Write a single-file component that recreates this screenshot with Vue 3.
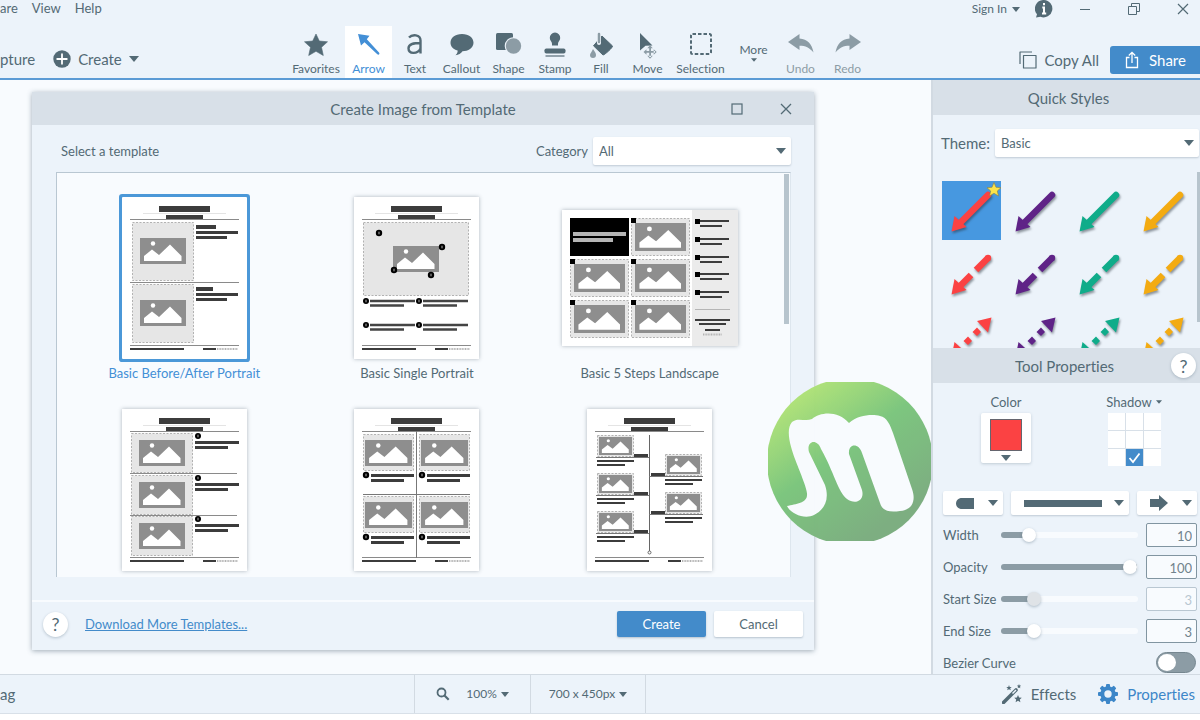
<script setup>
import { ref } from 'vue'

const tools = [
  { id: 'favorites', label: 'Favorites' },
  { id: 'arrow', label: 'Arrow' },
  { id: 'text', label: 'Text' },
  { id: 'callout', label: 'Callout' },
  { id: 'shape', label: 'Shape' },
  { id: 'stamp', label: 'Stamp' },
  { id: 'fill', label: 'Fill' },
  { id: 'move', label: 'Move' },
  { id: 'selection', label: 'Selection' },
  { id: 'more', label: 'More' },
  { id: 'undo', label: 'Undo' },
  { id: 'redo', label: 'Redo' },
]
const activeTool = ref('arrow')

const templates = [
  { id: 'before', label: 'Basic Before/After Portrait' },
  { id: 'single', label: 'Basic Single Portrait' },
  { id: 'land', label: 'Basic 5 Steps Landscape' },
  { id: 'three' },
  { id: 'four' },
  { id: 'timeline' },
]
const selected = ref('before')

const colors = ['#fb4243', '#5f2387', '#10ac8a', '#f3ab12']
const quickStyles = [0, 1, 2].flatMap((row) => colors.map((color) => ({ row, color })))

const sliders = ref([
  { id: 'width', label: 'Width', pos: 17, value: '10' },
  { id: 'opacity', label: 'Opacity', pos: 99, value: '100' },
  { id: 'start', label: 'Start Size', pos: 21, value: '3', disabled: true },
  { id: 'end', label: 'End Size', pos: 21, value: '3' },
])
const shadow = ref(7)
const bezier = ref(false)
const category = ref('All')
const theme = ref('Basic')
</script>

<template>
  <div class="app">
    <svg class="defs" aria-hidden="true">
      <symbol id="pic" viewBox="0 0 46 26" preserveAspectRatio="none">
        <rect width="46" height="26" fill="#8e8e8e" />
        <circle cx="13" cy="5.500" r="2.200" fill="#fff" />
        <path d="M4 23V18L12 11.500 19 17 30 6.500 41.500 18V23Z" fill="#fff" />
      </symbol>
      <symbol id="caret" viewBox="0 0 10 6"><path d="M0 0H10L5 6Z" fill="#536a75" /></symbol>
    </svg>

    <header class="top">
      <div class="top-left">
        <nav class="menu">
          <a href="#">are</a>
          <a href="#">View</a>
          <a href="#">Help</a>
        </nav>
        <div class="actions">
          <button class="plain">pture</button>
          <button class="plain create-menu">
            <svg width="18" height="18" viewBox="0 0 18 18"><circle cx="9" cy="9" r="8.700" fill="#536a75" /><path d="M9 4.200V13.800M4.200 9H13.800" stroke="#fff" stroke-width="1.800" stroke-linecap="round" /></svg>
            Create
            <svg width="10" height="6"><use href="#caret" /></svg>
          </button>
        </div>
      </div>

      <div class="tools">
        <button v-for="t in tools" :key="t.id" :class="['tool', t.id, { active: activeTool === t.id }]" @click="activeTool = t.id">
          <svg v-if="t.id !== 'more'" class="tool-icon" width="28" height="28" viewBox="0 0 28 28">
            <path v-if="t.id === 'favorites'" d="M14 3 17.300 10 25.500 10.800 19.500 16.300 21.300 24.500 14 20.300 6.700 24.500 8.500 16.300 2.500 10.800 10.700 10Z" fill="#536a75" stroke="#536a75" stroke-width=".6" stroke-linejoin="round" />
            <path v-else-if="t.id === 'arrow'" d="M3 3 14.500 4.700 11.800 8.300 24 21.500C25.200 23 23.700 24.500 22.300 23.300L9.500 11.300 6 14.500Z" fill="#438fd6" />
            <path v-else-if="t.id === 'text'" d="M8 6.500C11 3.200 19.500 3 19.500 9.500V22.500M19.500 12C13 12 7.500 12.500 7.500 17.300 7.500 23.300 16.500 23.500 19.500 17.500" fill="none" stroke="#536a75" stroke-width="2.400" />
            <path v-else-if="t.id === 'callout'" d="M14 3C21 3 25.500 6.800 25.500 11.800 25.500 17 20 20.300 14.500 20.300 13 22.500 10.500 24 7.500 24.200 9.300 22.800 9.800 21 9.600 19.600 5 18.300 2.500 15.300 2.500 11.800 2.500 6.800 7 3 14 3Z" fill="#536a75" />
            <g v-else-if="t.id === 'shape'"><rect x="1" y="2" width="17" height="17" rx="1.500" fill="#536a75" /><circle cx="18.500" cy="15" r="8.800" fill="#ecf3fa" /><circle cx="18.500" cy="15" r="7.700" fill="#8c9ca5" /></g>
            <g v-else-if="t.id === 'stamp'"><path d="M14 1.500A5.200 5.200 0 0 1 19.200 7C19.200 9.500 17 10.500 17 12.800V14.500H11V12.800C11 10.500 8.800 9.500 8.800 7A5.200 5.200 0 0 1 14 1.500Z" fill="#536a75" /><rect x="3.500" y="17.500" width="21" height="5" rx="1.800" fill="#536a75" /><path d="M4.500 25H23.500" stroke="#82939c" stroke-width="1.700" /></g>
            <g v-else-if="t.id === 'fill'"><path d="M15 5 25.500 15C26 16.500 17.500 24 16 24L6.500 14.800Z" fill="#536a75" stroke="#536a75" stroke-linejoin="round" /><path d="M12 3V12" stroke="#ecf3fa" stroke-width="4" stroke-linecap="round" /><path d="M12 3V11" stroke="#8c9ca5" stroke-width="2.500" stroke-linecap="round" /><path d="M6 18C8 21 9 22.500 9 24A3 3 0 0 1 3 24C3 22.500 5 20.500 6 18Z" fill="#8c9ca5" /></g>
            <g v-else-if="t.id === 'move'"><path d="M6 2 18.500 14.500 11.500 14.800 6 19.500Z" fill="#536a75" /><path fill="#8c9ca5" d="M15.200 16H17V26H15.200ZM11 20H21V21.700H11ZM16 14.300 18.800 17.300H13.300ZM16 27.700 18.800 24.700H13.300ZM9.500 21 12.500 18.200V23.700ZM22.700 21 19.700 18.200V23.700Z" /></g>
            <rect v-else-if="t.id === 'selection'" x="4" y="3" width="20" height="20" rx="1.500" fill="none" stroke="#536a75" stroke-width="2" stroke-dasharray="3.500 2" />
            <path v-else-if="t.id === 'undo'" d="M1 11 12.500 3V7.500C20.500 8.300 25 13 26.500 21.500 22.500 16.500 18.500 14.700 12.500 14.700V19Z" fill="#8c9ca5" />
            <path v-else d="M27 11 15.500 3V7.500C7.500 8.300 3 13 1.500 21.500 5.500 16.500 9.500 14.700 15.500 14.700V19Z" fill="#8c9ca5" />
          </svg>
          <span>{{ t.label }}</span>
          <svg v-if="t.id === 'more'" width="6" height="4"><use href="#caret" /></svg>
        </button>
      </div>

      <div class="top-right">
        <div class="window">
          <button class="plain sign">Sign In <svg width="8" height="5"><use href="#caret" /></svg></button>
          <button class="plain info" aria-label="Information"><svg width="18" height="18" viewBox="0 0 18 18"><path d="M9 0A8.700 8.700 0 1 1 5.500 16.800L1 17.500 2 14.300A8.700 8.700 0 0 1 9 0Z" fill="#536a75" /><path d="M9 3V5.300M7.300 7.500H9V13.300M7 13.500H11.200" fill="none" stroke="#fff" stroke-width="2" /></svg></button>
          <button class="plain" aria-label="Minimize"><svg width="12" height="12"><path d="M1 6.500H11" stroke="#536a75" /></svg></button>
          <button class="plain" aria-label="Restore"><svg width="12" height="12"><path d="M.5 3.500H8.500V11.500H.500ZM3.500 3V.5H11.500V8.500H9" fill="none" stroke="#536a75" /></svg></button>
          <button class="plain" aria-label="Close window"><svg width="12" height="12"><path d="M1 1 11 11M11 1 1 11" stroke="#536a75" stroke-width="1.200" /></svg></button>
        </div>
        <div class="share-row">
          <button class="plain copy"><svg width="18" height="18" viewBox="0 0 18 18"><path d="M4.500 4.500H17V17H4.500ZM1 13V1H13" fill="none" stroke="#536a75" stroke-width="1.200" stroke-linejoin="round" /></svg>Copy All</button>
          <button class="share"><svg width="14" height="18" viewBox="0 0 14 18"><path d="M4.500 6.500H1.500V16.500H12.500V6.500H9.500M7 12V1.500M3.800 4.500 7 1.300 10.200 4.500" fill="none" stroke="#fff" stroke-width="1.300" /></svg>Share</button>
        </div>
      </div>
    </header>

    <div class="body">
      <main class="canvas">
        <section class="dialog" role="dialog" aria-label="Create Image from Template">
          <header class="dialog-head">
            <h1>Create Image from Template</h1>
            <div class="dialog-controls">
              <button class="plain" aria-label="Maximize"><svg width="12" height="12"><rect x="1" y="1" width="10" height="10" fill="none" stroke="#536a75" stroke-width="1.200" /></svg></button>
              <button class="plain" aria-label="Close dialog"><svg width="12" height="12"><path d="M1 1 11 11M11 1 1 11" stroke="#536a75" stroke-width="1.300" /></svg></button>
            </div>
          </header>
          <div class="filter">
            <h2>Select a template</h2>
            <label for="category">Category</label>
            <div class="select">
              <select id="category" v-model="category"><option>All</option></select>
              <svg class="caret" width="10" height="6"><use href="#caret" /></svg>
            </div>
          </div>
          <div class="list">
            <button v-for="t in templates" :key="t.id" :class="['card', { selected: selected === t.id }]" :aria-label="t.label || 'Template'" @click="selected = t.id">
              <span class="frame">
                <svg v-if="t.id === 'land'" class="thumb" width="176" height="136" viewBox="0 0 176 136">
                  <rect x="130" width="46" height="136" fill="#ebebeb" />
                  <rect x="8" y="8" width="59" height="38" />
                  <g fill="#b5b5b5"><rect x="11" y="22" width="53" height="4" /><rect x="11" y="28" width="40" height="4" /></g>
                  <template v-for="n in 6" :key="n">
                    <g v-if="n > 1" :transform="`translate(${((n - 1) % 2) * 61 + 8}, ${Math.floor((n - 1) / 2) * 41 + 8})`">
                      <rect class="drop" x=".5" y=".5" width="58" height="37" />
                      <use href="#pic" x="4" y="5" width="51" height="28" />
                      <rect width="5" height="5" />
                    </g>
                  </template>
                  <g v-for="n in 5" :key="'b' + n" :transform="`translate(133, ${Math.round((n - 1) * 17.8 + 9)})`">
                    <rect width="5" height="5" /><rect x="5" y="1" width="29" height="2" fill="#3c3c3c" /><rect x="5" y="6" width="22" height="2" fill="#3c3c3c" />
                  </g>
                  <path d="M133 99.500H168" stroke="#b5b5b5" />
                  <g fill="#3c3c3c"><rect x="133" y="109" width="35" height="2" /><rect x="137" y="113" width="27" height="2" /><rect x="143" y="119" width="15" height="2" /></g>
                  <path d="M141 124.500H160" stroke="#b4b4b4" stroke-width="2" stroke-dasharray="1 .6" />
                </svg>
                <svg v-else class="thumb" width="125" height="162" viewBox="0 0 125 162">
                  <g fill="#3c3c3c">
                    <rect x="37" y="9" width="51" height="6" /><rect x="44" y="18" width="37" height="4" />
                    <rect x="8" y="151" width="54" height="2" /><rect x="81" y="151" width="13" height="2" />
                  </g>
                  <path d="M21 16.500H104" stroke="#e4e4e4" />
                  <path d="M8 22.500H117M8 148.500H117" stroke="#8a8a8a" />
                  <path d="M95 152H116" stroke="#b4b4b4" stroke-width="2" stroke-dasharray="1 .6" />
                  <template v-if="t.id === 'before'">
                    <g v-for="n in 2" :key="n" :transform="`translate(0, ${(n - 1) * 62})`">
                      <rect class="drop" x="10.500" y="25.500" width="61" height="58" />
                      <use href="#pic" x="18" y="41" width="46" height="26" />
                      <g fill="#3c3c3c"><rect x="74" y="28" :width="n === 1 ? 20 : 17" height="4" /><rect x="74" y="34" width="42" height="3" /><rect x="74" y="39" width="31" height="3" /></g>
                    </g>
                    <path d="M8 85.500H117" stroke="#8a8a8a" />
                  </template>
                  <template v-else-if="t.id === 'single'">
                    <rect class="drop" x="9.500" y="25.500" width="105" height="73" />
                    <use href="#pic" x="39" y="49" width="46" height="26" />
                    <g v-for="p in [[25, 36], [88, 50], [40, 73], [77, 78]]" :key="p[0]" :transform="`translate(${p[0]}, ${p[1]})`">
                      <circle r="3.200" /><path d="M0-1.300V1.300" stroke="#fff" stroke-width=".7" />
                    </g>
                    <g v-for="p in [[12, 104], [65, 104], [12, 128], [65, 128]]" :key="p.join()" :transform="`translate(${p[0]}, ${p[1]})`">
                      <circle r="3" /><path d="M0-1.300V1.300" stroke="#fff" stroke-width=".7" />
                      <path d="M4 0H49M4 4.500H38" stroke="#444" stroke-width="2.500" />
                    </g>
                  </template>
                  <template v-else-if="t.id === 'three'">
                    <g v-for="n in 3" :key="n" :transform="`translate(0, ${Math.round((n - 1) * 41.5)})`">
                      <rect class="drop" x="9.500" y="24.500" width="61" height="39" />
                      <use href="#pic" x="17" y="31" width="46" height="26" />
                      <circle cx="76" cy="27" r="3" /><path d="M76 25.700V28.300" stroke="#fff" stroke-width=".7" />
                      <rect x="73" y="32" width="44" height="3" fill="#3c3c3c" /><rect x="73" y="37" width="33" height="3" fill="#3c3c3c" />
                      <path v-if="n < 3" d="M8 64.500H115" stroke="#8a8a8a" />
                    </g>
                  </template>
                  <template v-else-if="t.id === 'four'">
                    <g v-for="p in [[0, 0], [56, 0], [0, 62], [56, 62]]" :key="p.join()" :transform="`translate(${p[0]}, ${p[1]})`">
                      <rect class="drop" x="9.500" y="25.500" width="50" height="36" />
                      <use href="#pic" x="11" y="31" width="47" height="26" />
                      <circle cx="12" cy="66" r="3.200" /><path d="M12 64.700V67.300" stroke="#fff" stroke-width=".7" />
                      <rect x="17" y="65" width="43" height="3" fill="#3c3c3c" /><rect x="17" y="70" width="33" height="3" fill="#3c3c3c" />
                    </g>
                    <path d="M62.500 22V149M9 85.500H116" stroke="#777" />
                  </template>
                  <template v-else>
                    <path d="M62.500 26V142" stroke="#666" /><circle cx="62.500" cy="143.500" r="1.500" fill="#fff" stroke="#666" />
                    <g v-for="p in [[0, 0], [0, 38], [0, 76], [68, 19], [68, 57]]" :key="p.join()" :transform="`translate(${p[0]}, ${p[1]})`">
                      <rect class="drop" x="10.500" y="26.500" width="36" height="21" />
                      <use href="#pic" x="12" y="28" width="33" height="18" />
                      <path :d="p[0] ? 'M-6 48.500H48' : 'M9 48.500H62'" stroke="#777" />
                      <g fill="#3c3c3c"><rect :x="p[0] ? -4 : 47" y="45" width="14" height="3" /><rect x="10" y="51" width="37" height="2" /><rect x="10" y="55" width="28" height="2" /></g>
                    </g>
                  </template>
                </svg>
              </span>
              <span v-if="t.label" class="caption">{{ t.label }}</span>
            </button>
            <i class="scroll"></i>
          </div>
          <footer class="dialog-foot">
            <button class="help" aria-label="Dialog help">?</button>
            <a href="#">Download More Templates...</a>
            <button class="btn primary">Create</button>
            <button class="btn">Cancel</button>
          </footer>
        </section>

        <svg class="brand" width="163" height="159" viewBox="0 0 163 159" aria-hidden="true">
          <defs>
            <linearGradient id="leaf" x1=".2" y1=".1" x2=".75" y2=".85"><stop offset="0" stop-color="#aee276" /><stop offset=".45" stop-color="#7ac57b" /><stop offset="1" stop-color="#7aac7d" /></linearGradient>
          </defs>
          <ellipse cx="82" cy="79.500" rx="83" ry="83" fill="url(#leaf)" />
          <path d="M24 40C30 35 37 40 44 37 52 30 70 28 81 41 90 33 104 32 112 34 119 35 122 43 125 51L144 107C148 118 145 128 132 129 120 131 114 128 112 121L94 71C91 61 80 61 81 72L94 108C97 119 87 123 79 117 70 110 66 90 53 67 49 56 38 59 41 70L57 103C62 118 56 128 46 133 36 138 22 131 19 124 28 122 39 121 39 113 40 108 31 88 27 77 23 66 17 48 24 40Z" fill="#f8fbfe" />
        </svg>
      </main>

      <aside class="side">
        <h2 class="panel-head">Quick Styles</h2>
        <div class="theme">
          <label for="theme">Theme:</label>
          <div class="select">
            <select id="theme" v-model="theme"><option>Basic</option></select>
            <svg class="caret" width="10" height="6"><use href="#caret" /></svg>
          </div>
        </div>
        <div class="styles">
          <button v-for="(s, i) in quickStyles" :key="i" :class="['style', { chosen: i === 0 }]" :aria-label="'Quick style ' + (i + 1)">
            <svg width="59" height="59" viewBox="0 0 59 59">
              <g class="stroke" :stroke="s.color" :fill="s.color">
                <path stroke="none" d="M9.500 50.500 12.500 35 24.500 46Z" />
                <path v-if="s.row === 0" d="M46 14 17 43" stroke-width="6.500" stroke-linecap="round" />
                <g v-else-if="s.row === 1"><path d="M46 14 34 26" stroke-width="6.500" /><circle cx="46" cy="14" r="3.200" stroke="none" /><path d="M29 31 17 43" stroke-width="6.500" /></g>
                <g v-else stroke="none"><path d="M49.500 10.500 35 14 46 25.500ZM35 20.500 39 25 35 29 30.500 25ZM26 29.500 30 34 26 38 21.500 34Z" /></g>
              </g>
              <path v-if="i === 0" d="M52 1.500 54 6.300 59 6.700 55.300 10 56.500 15 52 12.300 47.500 15 48.700 10 45 6.700 50 6.300Z" fill="#fbe34b" stroke="#8b8142" stroke-width=".6" />
            </svg>
          </button>
          <i class="scroll"></i>
        </div>
        <div class="panel-head tool-head">
          <h2>Tool Properties</h2>
          <button class="help" aria-label="Tool help">?</button>
        </div>
        <div class="props">
          <div class="swatches">
            <div class="prop color">
              <span>Color</span>
              <button class="swatch" aria-label="Arrow color"><i></i><svg width="10" height="6"><use href="#caret" /></svg></button>
            </div>
            <div class="prop shadow">
              <button class="plain">Shadow <svg width="6" height="4"><use href="#caret" /></svg></button>
              <div class="nine">
                <button v-for="n in 9" :key="n" :class="{ on: shadow === n - 1 }" :aria-label="'Shadow position ' + n" @click="shadow = n - 1">
                  <svg v-if="shadow === n - 1" width="17" height="17"><path d="M3.500 9 7 13 13.500 4.500" fill="none" stroke="#fff" stroke-width="1.800" /></svg>
                </button>
              </div>
            </div>
          </div>
          <div class="ends">
            <button class="drop-btn" aria-label="Start style"><svg width="18" height="11"><path d="M6 0H18V11H6C-2 11-2 0 6 0Z" fill="#536a75" /></svg><svg width="10" height="6"><use href="#caret" /></svg></button>
            <button class="drop-btn wide" aria-label="Line style"><svg width="78" height="7"><rect width="78" height="7" fill="#536a75" /></svg><svg width="10" height="6"><use href="#caret" /></svg></button>
            <button class="drop-btn" aria-label="End style"><svg width="18" height="16"><path d="M0 4H9V0L18 8 9 16V12H0Z" fill="#536a75" /></svg><svg width="10" height="6"><use href="#caret" /></svg></button>
          </div>
          <div v-for="s in sliders" :key="s.id" :class="['slider', { off: s.disabled }]">
            <label :for="s.id">{{ s.label }}</label>
            <input :id="s.id" v-model="s.pos" type="range" min="0" max="100" :disabled="s.disabled" :style="{ '--fill': s.pos + '%' }" />
            <input v-model="s.value" class="num" type="text" :disabled="s.disabled" :aria-label="s.label + ' value'" />
          </div>
          <div class="slider bezier">
            <label for="bezier">Bezier Curve</label>
            <input id="bezier" v-model="bezier" type="checkbox" class="toggle" />
          </div>
        </div>
      </aside>
    </div>

    <footer class="status">
      <button class="plain tag">ag</button>
      <button class="plain cell zoom">
        <svg width="14" height="14" viewBox="0 0 14 14"><circle cx="5.500" cy="5.500" r="4" fill="none" stroke="#536a75" stroke-width="1.800" /><path d="M8.500 8.500 12.700 12.700" stroke="#536a75" stroke-width="2.200" /></svg>
        <span>100% <svg width="8" height="5"><use href="#caret" /></svg></span>
      </button>
      <button class="plain cell size"><span>700 x 450px <svg width="8" height="5"><use href="#caret" /></svg></span></button>
      <div class="tabs">
        <button class="plain"><svg width="20" height="20" viewBox="0 0 20 20"><path d="M1.500 18.500 14 6" stroke="#536a75" stroke-width="3.600" stroke-linecap="round" /><path d="M10.500 9.500 14 6" stroke="#eef4fb" stroke-width="1.500" /><path fill="#536a75" d="M7 1 7.700 3 9.700 3 8.200 4.300 8.800 6.300 7 5.200 5.200 6.300 5.800 4.300 4.300 3H6.300ZM17 0 17.600 1.500 19 1.600 18 2.700 18.300 4.200 17 3.400 15.700 4.200 16 2.700 15 1.600 16.400 1.500ZM16 11 17.100 13.500 19.800 13.700 17.800 15.500 18.400 18.200 16 16.800 13.600 18.200 14.200 15.500 12.200 13.700 14.900 13.500Z" /></svg>Effects</button>
        <button class="plain current"><svg width="20" height="20" viewBox="-10 -10 20 20"><g fill="#3c86c8"><rect v-for="n in 8" :key="n" x="-2" y="-10" width="4" height="5" rx="1" :transform="`rotate(${n * 45})`" /></g><circle r="5.700" fill="none" stroke="#3c86c8" stroke-width="4" /></svg>Properties</button>
      </div>
    </footer>
  </div>
</template>

<style>
body { margin: 0; background: #fff; }
</style>

<style scoped>
.app { box-sizing: border-box; min-height: 100vh; padding-bottom: 6px; display: flex; flex-direction: column; overflow: hidden; font-family: Lato, "Liberation Sans", sans-serif; font-variant-ligatures: none; font-size: 13px; line-height: 16px; color: #536a75; background: #fff; }
.app * { box-sizing: border-box; }
.defs { position: absolute; width: 0; height: 0; }
button, select, input { font: inherit; font-variant-ligatures: none; color: inherit; margin: 0; }
button { cursor: pointer; border: 0; padding: 0; }
svg { display: block; flex: none; }
h1, h2 { margin: 0; font-weight: 400; font-size: 15px; }
.plain { background: none; display: flex; align-items: center; }

.top { display: flex; height: 80px; background: #ecf3fa; border-bottom: 2px solid #5b9bd5; }
.top-left { width: 287px; }
.menu { display: flex; gap: 14px; }
.menu a { color: inherit; text-decoration: none; }
.actions { display: flex; gap: 18px; height: 18px; margin-top: 34px; font-size: 15px; }
.create-menu { gap: 7px; }
.tools { display: flex; flex: 1; padding-top: 26px; }
.tool { width: 47px; background: none; display: flex; flex-direction: column; align-items: center; gap: 2px; padding-top: 5px; font-size: 12px; white-space: nowrap; height: 52px; }
.tool.favorites { width: 58px; }
.tool.text, .tool.stamp, .tool.fill { width: 46px; }
.tool.selection { width: 59px; }
.tool.active { background: #fff; color: #438fd6; }
.tool.more { padding-top: 16px; gap: 0; }
.tool.undo, .tool.redo { color: #8c9ca5; }
.top-right { display: flex; flex-direction: column; align-items: flex-end; }
.window { display: flex; align-items: center; height: 18px; padding-right: 11px; gap: 37px; }
.window .sign { gap: 5px; margin-right: -22px; font-size: 12px; }
.window .info { margin-right: -11px; }
.share-row { display: flex; align-items: center; gap: 11px; margin-top: 28px; font-size: 15px; }
.copy { gap: 8px; }
.share { display: flex; align-items: center; gap: 10px; height: 28px; width: 90px; padding-left: 15px; border-radius: 3px 0 0 3px; background: #438bca; color: #fff; }

.body { display: flex; flex: 1; min-height: 0; }
.canvas { position: relative; flex: 1; display: flex; padding: 12px 117px 24px 32px; background: #f8fbfe; }
.dialog { flex: 1; display: flex; flex-direction: column; background: #ecf3fa; box-shadow: 0 1px 5px rgba(50, 75, 95, .45); }
.dialog-head { position: relative; display: flex; align-items: center; justify-content: center; height: 33px; background: #d8e0e8; }
.dialog-controls { position: absolute; right: 22px; display: flex; gap: 37px; }
.filter { display: flex; align-items: center; gap: 5px; padding: 12px 23px 7px 29px; }
.filter h2 { font-size: 13px; flex: 1; }
.select { position: relative; width: 198px; }
.select select { appearance: none; width: 100%; height: 28px; padding: 0 6px; border: 0; border-radius: 2px; background: #fff; box-shadow: 0 1px 2px rgba(60, 85, 105, .25); }
.select .caret { position: absolute; right: 5px; top: 11px; pointer-events: none; }
.list { position: relative; flex: 1 1 400px; min-height: 0; max-height: 405px; margin: 0 23px 0 24px; padding: 21px 24px 0 11px; display: grid; grid-template-columns: repeat(3, 1fr); grid-auto-rows: 212px; overflow: hidden; background: #f8fbfe; border: 1px solid #b9c7d2; border-right-color: #dde6ee; border-bottom: 0; }
.card { background: none; display: flex; flex-direction: column; align-items: center; gap: 5px; padding-top: 2px; }
.frame { height: 164px; display: flex; align-items: center; }
.thumb { background: #fff; box-shadow: 0 0 4px rgba(60, 75, 90, .4); }
.card.selected .thumb { box-shadow: 0 0 0 3px #4b98d8; border-radius: 1px; }
.card.selected .caption { color: #438fd6; }
.drop { fill: #e6e6e6; stroke: #b2b2b2; stroke-dasharray: 2 1.5; }
.scroll { position: absolute; right: 1px; top: 1px; width: 5px; height: 150px; background: #b7c4cd; }
.dialog-foot { margin-top: auto; height: 50px; display: flex; align-items: center; gap: 8px; padding: 0 11px 4px; border-top: 2px solid #f8fbfe; }
.dialog-foot a { flex: 1; margin-left: 9px; color: #438bca; }
.help { width: 25px; height: 25px; border-radius: 50%; background: #fff; box-shadow: 0 1px 3px rgba(60, 85, 105, .3); font-size: 18px; }
.btn { width: 89px; height: 26px; border-radius: 2px; background: #fff; box-shadow: 0 1px 2px rgba(60, 85, 105, .3); }
.btn.primary { background: #438bca; color: #fff; }
.brand { position: absolute; right: 0; top: 302px; opacity: .97; }

.side { width: 269px; display: flex; flex-direction: column; background: #ecf3fa; border-left: 2px solid #d2dae2; }
.panel-head { height: 35px; display: flex; align-items: center; justify-content: center; padding-left: 4px; background: #d8e0e8; }
.theme { display: flex; align-items: center; gap: 5px; padding: 14px 1px 15px 8px; font-size: 15px; }
.theme .select { flex: 1; font-size: 13px; }
.styles { position: relative; height: 176px; padding: 9px 0 0 9px; display: grid; grid-template-columns: repeat(4, 59px); grid-auto-rows: 59px; gap: 4px 5px; overflow: hidden; }
.styles .scroll { right: 0; top: 0; width: 3px; }
.style { background: none; }
.style.chosen { background: #4798e0; }
.stroke { filter: drop-shadow(1px 2px 1px rgba(40, 50, 60, .5)); }
.tool-head { position: relative; padding-right: 4px; padding-left: 0; }
.tool-head .help { position: absolute; right: 4px; top: 5px; }
.props { flex: 1; padding: 11px 3px 0 10px; }
.swatches { display: flex; justify-content: space-between; padding: 0 38px; }
.prop { display: flex; flex-direction: column; align-items: center; gap: 3px; width: 50px; white-space: nowrap; }
.swatch { width: 50px; height: 50px; display: flex; flex-direction: column; align-items: center; gap: 4px; padding-top: 6px; border-radius: 2px; background: #fff; box-shadow: 0 1px 3px rgba(60, 85, 105, .25); }
.swatch i { width: 32px; height: 32px; background: #fb4243; border: 1px solid #65656e; }
.prop .plain { gap: 4px; }
.nine { display: grid; grid-template-columns: repeat(3, 17px); grid-auto-rows: 17px; gap: 1px; background: #d8e0e8; }
.nine button { background: #fff; }
.nine .on { background: #438bca; }
.ends { display: flex; gap: 8px; margin-top: 25px; margin-bottom: 4px; }
.drop-btn { width: 60px; height: 24px; display: flex; align-items: center; justify-content: space-between; padding: 0 5px 0 13px; border-radius: 2px; background: #fff; box-shadow: 0 1px 2px rgba(60, 85, 105, .25); }
.drop-btn.wide { flex: 1; }
.slider { display: flex; align-items: center; height: 32px; }
.slider label { width: 58px; white-space: nowrap; }
input[type="range"] { appearance: none; flex: 1; min-width: 0; height: 14px; margin-right: 8px; background: none; }
input[type="range"]::-webkit-slider-runnable-track { height: 6px; border-radius: 3px; background: linear-gradient(90deg, #8c9ca5 var(--fill), #f8fbfe var(--fill)); }
input[type="range"]::-webkit-slider-thumb { appearance: none; width: 14px; height: 14px; margin-top: -4px; border-radius: 50%; background: #fff; box-shadow: 0 1px 3px rgba(60, 85, 105, .35); }
.off input[type="range"]::-webkit-slider-thumb { background: #dfe3e7; }
.num { width: 51px; height: 24px; border: 1px solid #8195a1; border-radius: 2px; background: #f8fbfe; padding: 2px 4px 0; text-align: right; color: #71838d; }
.num:disabled { border-color: #b9c7d2; color: #b9c7d2; }
.slider.bezier { justify-content: space-between; height: 27px; padding-top: 4px; }
.toggle { appearance: none; width: 40px; height: 21px; margin-right: 1px; padding: 1px; border: 1px solid #75868f; border-radius: 11px; background: #8c9ca5; }
.toggle::before { content: ""; display: block; width: 18px; height: 17px; border-radius: 50%; background: #fff; }
.toggle:checked::before { margin-left: auto; }

.status { display: flex; height: 40px; background: #ecf3fa; border-top: 1px solid #d2dae2; border-bottom: 1px solid #d8e0e8; font-size: 12px; }
.tag { width: 414px; font-size: 15px; }
.cell { width: 116px; justify-content: center; gap: 16px; border-left: 1px solid #d2dae2; }
.cell span { display: flex; align-items: center; gap: 4px; }
.size { border-right: 1px solid #d2dae2; }
.tabs { margin-left: auto; display: flex; gap: 22px; padding-right: 5px; font-size: 15px; }
.tabs button { gap: 9px; }
.current { color: #3c86c8; }
</style>
